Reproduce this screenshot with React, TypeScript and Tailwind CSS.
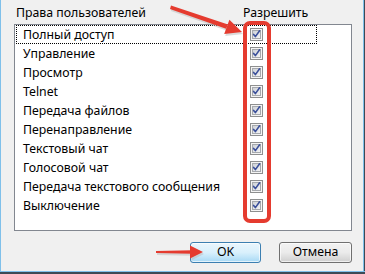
import React from "react";

const items = [
  "Полный доступ",
  "Управление",
  "Просмотр",
  "Telnet",
  "Передача файлов",
  "Перенаправление",
  "Текстовый чат",
  "Голосовой чат",
  "Передача текстового сообщения",
  "Выключение",
];

function CheckBox() {
  return (
    <svg width="13" height="13" viewBox="0 0 13 13" className="block">
      <defs>
        <linearGradient id="cbg" x1="0" y1="0" x2="1" y2="1">
          <stop offset="0" stopColor="#cbcfd5" />
          <stop offset="1" stopColor="#f6f6f6" />
        </linearGradient>
      </defs>
      <rect x="0.5" y="0.5" width="12" height="12" fill="#f4f4f4" stroke="#8e8f8f" />
      <rect x="2.5" y="2.5" width="8" height="8" fill="url(#cbg)" stroke="#a6a9ad" />
      <path d="M3.6 6.4 L5.4 8.6 L9.6 2.8" fill="none" stroke="#3a4f9a" strokeWidth="1.6" strokeLinejoin="round" strokeLinecap="round" />
    </svg>
  );
}

export default function App() {
  return (
    <div
      className="relative w-[365px] h-[274px] overflow-hidden bg-[#f0f0f0] text-[12.3px] text-black"
      style={{ fontFamily: '"Noto Sans", "Liberation Sans", sans-serif' }}
    >
      <div className="flex flex-col h-full">
        <div className="h-[24px] flex items-center pt-[3px]">
          <span className="pl-[16px] w-[243px] whitespace-nowrap">Права пользователей</span>
          <span className="whitespace-nowrap">Разрешить</span>
        </div>
        <div className="ml-[14px] w-[338px] h-[207px] border border-[#828790] bg-white">
          {items.map((t, i) => (
            <div key={t} className="relative h-[19px] flex items-center">
              {i === 0 && (
                <div className="absolute left-[1px] top-0 w-[301px] h-[19px] border border-dotted border-black" />
              )}
              <span className="pl-[8px] pt-[2px] w-[235px] whitespace-nowrap leading-none">{t}</span>
              <CheckBox />
            </div>
          ))}
        </div>
        <div className="flex justify-end gap-[18px] mt-[11px] pr-[13px]">
          <button className="w-[71px] h-[21px] rounded-[3px] border border-[#3c7fb1] bg-gradient-to-b from-[#eaf6fd] via-[#d9f0fc] to-[#a7d9f5] shadow-[inset_0_0_0_1px_#ffffffaa] flex items-center justify-center">
            OK
          </button>
          <button className="w-[73px] h-[21px] rounded-[3px] border border-[#707070] bg-gradient-to-b from-[#f2f2f2] via-[#ebebeb] to-[#cfcfcf] shadow-[inset_0_0_0_1px_#ffffffaa] flex items-center justify-center">
            Отмена
          </button>
        </div>
      </div>

      {/* window frame */}
      <div className="absolute left-0 top-0 h-full w-[1px] bg-[#7fc0ea]" />
      <div className="absolute right-[1px] top-0 h-[272px] w-[1px] bg-[#7fc0ea]" />
      <div className="absolute right-0 top-0 h-full w-[1px] bg-[#3d4a55]" />
      <div className="absolute left-0 bottom-[2px] w-full h-[1px] bg-[#7fc0ea]" />
      <div className="absolute left-0 bottom-0 w-full h-[2px] bg-[#3d4a55]" />

      {/* red highlight */}
      <div className="absolute left-[243px] top-[21px] w-[28px] h-[202px] border-[4px] border-[#e53b2f] rounded-[7px]" />

      {/* arrows */}
      <svg className="absolute left-0 top-0" width="365" height="274" viewBox="0 0 365 274">
        <polygon points="170,9 226,28.8 228,24.6 171,5.5" fill="#b9b9b9" opacity="0.5" transform="translate(1,2)" />
        <polygon points="224.2,34 229.4,19.8 242,32" fill="#b9b9b9" opacity="0.5" transform="translate(1,2)" />
        <polygon points="170,9 226,28.8 228,24.6 171,5.5" fill="#e53b2f" />
        <polygon points="224.2,34 229.4,19.8 242,32" fill="#e53b2f" />
        <polygon points="156,251 192,250.3 192,253.7 156,253" fill="#b9b9b9" opacity="0.5" transform="translate(1,2)" />
        <polygon points="190,245.5 203,252 190,258.5" fill="#b9b9b9" opacity="0.5" transform="translate(1,2)" />
        <polygon points="156,251 192,250.3 192,253.7 156,253" fill="#e53b2f" />
        <polygon points="190,245.5 203,252 190,258.5" fill="#e53b2f" />
      </svg>
    </div>
  );
}
